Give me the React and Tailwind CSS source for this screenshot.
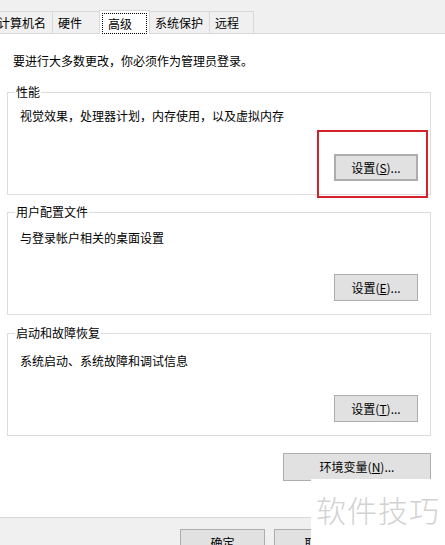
const font = { fontFamily: '"Noto Sans CJK SC", "Microsoft YaHei", sans-serif' };

const tabs = [
  { label: "计算机名", w: "w-[57px]", pl: "pl-[2px]" },
  { label: "硬件", w: "w-[46px]", pl: "pl-[5px]", noRight: true },
  { label: "高级", active: true },
  { label: "系统保护", w: "w-[60px]", pl: "pl-[5px]" },
  { label: "远程", w: "w-[44px]", pl: "pl-[5px]" },
];

function Tab({ tab }) {
  if (tab.active) {
    return (
      <div className="w-[51px] h-[24px] -mb-[1px] border border-b-0 border-[#d9d9d9] bg-white z-10 px-[2px] pt-[2px]">
        <div className="h-[21px] border border-dotted border-black flex items-center pl-[5px] text-[12px] leading-none text-black">
          {tab.label}
        </div>
      </div>
    );
  }
  return (
    <div
      className={`${tab.w} ${tab.pl} h-[22px] border-t ${tab.noRight ? "" : "border-r"} border-[#d9d9d9] bg-[#f0f0f0] flex items-center text-[12px] text-black`}
    >
      {tab.label}
    </div>
  );
}

function Button({ children, className = "" }) {
  return (
    <div className={`h-[27px] bg-[#e1e1e1] border border-[#adadad] flex items-center justify-center text-[12px] text-black ${className}`}>
      {children}
    </div>
  );
}

function Group({ title, desc, btn, pt, className = "", focused }) {
  return (
    <div className={`relative ml-[7px] w-[424px] h-[103px] border border-[#dcdcdc] flex flex-col ${className}`}>
      <span className="absolute -top-[9px] left-[7px] bg-white px-[1px] text-[12px] leading-[16px] text-black">{title}</span>
      <div className={`pl-[12px] ${pt} text-[12px] leading-[16px] text-black`}>{desc}</div>
      <div className="mt-auto mb-[13px] mr-[12px] self-end">
        {focused ? (
          <div className="relative">
            <Button className="w-[84px] border-[#0078d7] border-2">{btn}</Button>
            <div className="absolute -left-[17px] -top-[24px] w-[111px] h-[68px] border-2 border-[#d2222a]" />
          </div>
        ) : (
          <Button className="w-[84px]">{btn}</Button>
        )}
      </div>
    </div>
  );
}

export default function App() {
  return (
    <div className="relative w-[445px] h-[545px] bg-[#f0f0f0] overflow-hidden" style={font}>
      <div className="flex items-end pt-[10px] -ml-[4px]">
        {tabs.map((t) => (
          <Tab key={t.label} tab={t} />
        ))}
      </div>
      <div className="h-[485px] bg-white border-t border-b border-[#d9d9d9]">
        <div className="pl-[13px] pt-[19px] text-[12px] leading-[16px] text-black">
          要进行大多数更改，你必须作为管理员登录。
        </div>
        <Group
          className="mt-[23px]"
          pt="pt-[15px]"
          title="性能"
          desc="视觉效果，处理器计划，内存使用，以及虚拟内存"
          btn={<span>设置(<u>S</u>)...</span>}
          focused
        />
        <Group
          className="mt-[17px]"
          pt="pt-[17px]"
          title="用户配置文件"
          desc="与登录帐户相关的桌面设置"
          btn={<span>设置(<u>E</u>)...</span>}
        />
        <Group
          className="mt-[18px]"
          pt="pt-[19px]"
          title="启动和故障恢复"
          desc="系统启动、系统故障和调试信息"
          btn={<span>设置(<u>T</u>)...</span>}
        />
        <div className="flex justify-end mt-[17px] mr-[14px]">
          <Button className="w-[148px] h-[28px]">
            <span>环境变量(<u>N</u>)...</span>
          </Button>
        </div>
      </div>
      <div className="flex gap-[9px] pl-[180px] pt-[11px]">
        <Button className="w-[85px] shrink-0">确定</Button>
        <Button className="w-[85px] shrink-0">取消</Button>
        <Button className="w-[85px] shrink-0">应用(A)</Button>
      </div>
      <div className="absolute left-[311px] top-[479px] w-[134px] h-[66px] bg-white flex items-start pl-[5px] pt-[10px]">
        <span className="text-[30px] leading-[40px] text-[#d2d2d2] tracking-[1px] font-light">软件技巧</span>
      </div>
    </div>
  );
}
